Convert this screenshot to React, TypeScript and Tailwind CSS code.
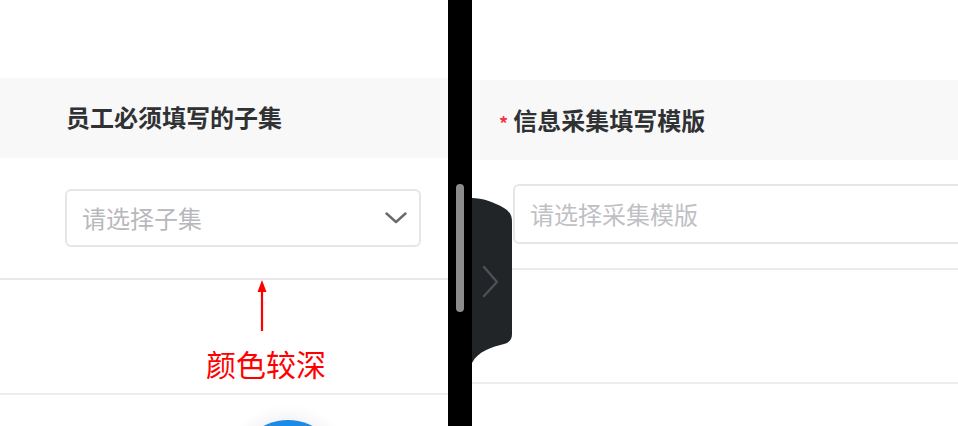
import React from "react";

export default function App() {
  return (
    <div
      className="relative flex h-[426px] w-[958px] overflow-hidden bg-white"
      style={{ fontFamily: '"Noto Sans CJK SC", "Noto Sans", sans-serif' }}
    >
      {/* Left panel */}
      <div className="flex w-[448px] shrink-0 flex-col">
        <div className="h-[78px] shrink-0" />
        <div className="flex h-[80px] shrink-0 items-center bg-[#f8f8f8] pb-[2px] pl-[66px] text-[24px] font-bold leading-none text-[#303133]">
          员工必须填写的子集
        </div>
        <div className="flex h-[120px] shrink-0 items-center pl-[65px]">
          <div className="flex h-[58px] w-[356px] items-center justify-between rounded-[6px] border-2 border-[#e6e6ea] pl-[15px] pr-[12px]">
            <span className="text-[24px] leading-none text-[#b8b8bc]">请选择子集</span>
            <svg width="22" height="12" viewBox="0 0 22 12" fill="none">
              <path d="M1.5 1.5 L11 10 L20.5 1.5" stroke="#6a6a6e" strokeWidth="2.4" strokeLinecap="round" strokeLinejoin="round" />
            </svg>
          </div>
        </div>
        <div className="h-[2px] shrink-0 bg-[#e8e8ec]" />
        <div className="flex h-[113px] shrink-0 flex-col">
          <svg className="ml-[256px]" width="12" height="51" viewBox="0 0 12 51" fill="none">
            <path d="M6 4 L6 51" stroke="#ff0000" strokeWidth="2.2" />
            <path d="M6 0 L10.5 12 L1.5 12 Z" fill="#ff0000" />
          </svg>
          <div className="ml-[206px] mt-[14px] text-[30px] leading-[36px] text-[#ff0000]">颜色较深</div>
        </div>
        <div className="h-[2px] shrink-0 bg-[#ededf1]" />
        <div className="relative flex-1">
          <div className="absolute left-[235px] top-[25px] h-[106px] w-[106px] rounded-full bg-[#1f8ae6] shadow-[0_0_14px_6px_rgba(0,0,0,0.05)]" />
        </div>
      </div>

      {/* Black separator with scrollbar */}
      <div className="flex w-[24px] shrink-0 justify-center bg-black pt-[184px]">
        <div className="h-[128px] w-[8px] rounded-full bg-[#8c8c8c]" />
      </div>

      {/* Right panel */}
      <div className="flex min-w-0 flex-1 flex-col overflow-hidden">
        <div className="h-[80px] shrink-0" />
        <div className="flex h-[80px] shrink-0 items-center bg-[#f8f8f8] pl-[27px]">
          <span className="mr-[5px] mt-[6px] text-[18px] font-bold leading-none text-[#f5334a]">*</span>
          <span className="text-[24px] font-bold leading-none text-[#303133]">信息采集填写模版</span>
        </div>
        <div className="flex h-[108px] shrink-0 pl-[41px] pt-[24px]">
          <div className="flex h-[60px] w-[500px] shrink-0 items-center rounded-[6px] border-2 border-[#e6e6ea] pl-[15px]">
            <span className="text-[24px] leading-none text-[#c0c0c4]">请选择采集模版</span>
          </div>
        </div>
        <div className="h-[2px] shrink-0 bg-[#ebebef]" />
        <div className="h-[112px] shrink-0" />
        <div className="h-[2px] shrink-0 bg-[#ededf1]" />
      </div>

      {/* Dark collapse tab overlay */}
      <svg className="absolute left-[472px] top-[196px]" width="40" height="168" viewBox="0 0 40 168">
        <path
          d="M0 2 C10 2 22 6 32 12 Q40 16 40 26 L40 138 Q40 146 32 148 C20 151 6 155 0 167 Z"
          fill="#222528"
        />
        <path d="M12 71 L25 86 L12 100" stroke="#4d5156" strokeWidth="2.4" fill="none" strokeLinecap="round" strokeLinejoin="round" />
      </svg>
    </div>
  );
}
